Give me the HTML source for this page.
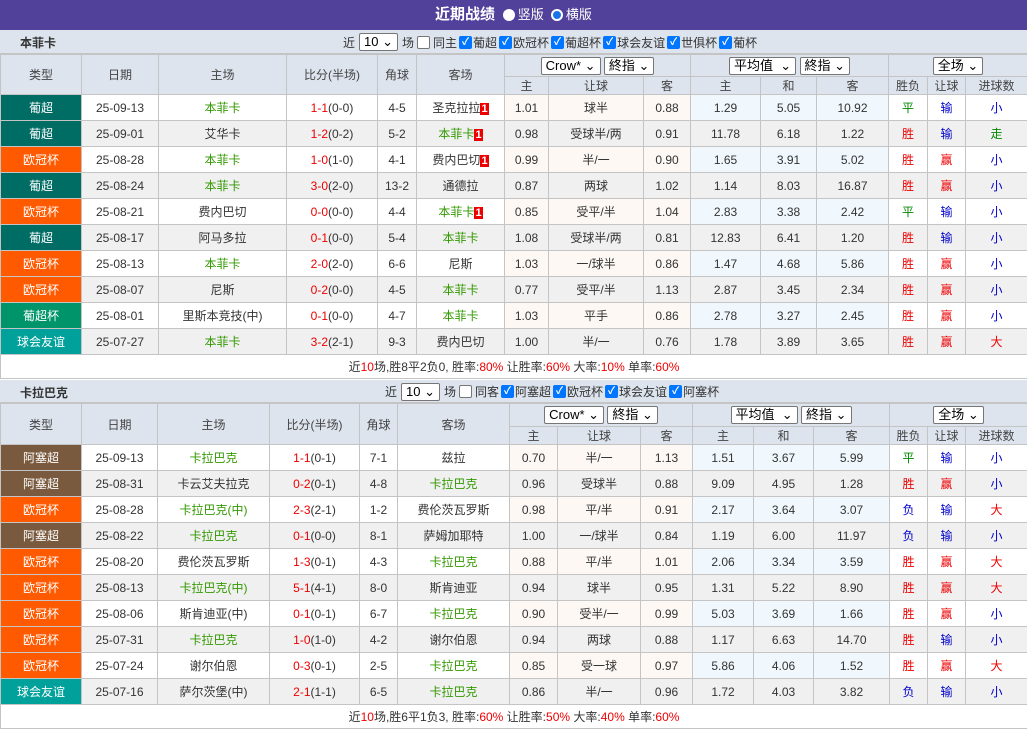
<!DOCTYPE html>
<html><head><meta charset="utf-8">
<style>
*{margin:0;padding:0;box-sizing:border-box}
body{width:1027px;height:730px;overflow:hidden;background:#fff;font-family:"Liberation Sans","Noto Sans CJK SC",sans-serif;font-size:12px;color:#333}
.top{height:30px;background:#52419a;color:#fff;text-align:center;line-height:30px;font-size:13px}
.top b{font-size:15px;margin-right:4px}
.rd{display:inline-block;width:12px;height:12px;border-radius:50%;vertical-align:-2px;margin-right:3px}
.bar{height:24px;background:#dde4ee;position:relative;border-bottom:1px solid #c4c4c4}
.bar .t{position:absolute;left:20px;top:5px;font-weight:bold;font-size:12px;line-height:16px}
.bar .c{position:absolute;top:0;height:24px;white-space:nowrap;font-size:12px;display:flex;align-items:center}
.sel{display:inline-block;border:1px solid #767676;border-radius:2px;background:#fff;height:18px;line-height:16px;padding:0 4px;vertical-align:middle;font-size:13px;color:#000}
.bar .sel{margin:0 4px}
.cb{display:inline-block;width:13px;height:13px;border-radius:2px;background:#0075ff;color:#fff;font-size:10px;line-height:13px;text-align:center;font-weight:bold;margin:0 1px 0 2px}
.ub{display:inline-block;width:13px;height:13px;border-radius:2px;border:1px solid #767676;background:#fff;margin:0 3px}
table{border-collapse:collapse;table-layout:fixed;width:1027px}
td{border:1px solid #c4c4c4;text-align:center;padding:0;white-space:nowrap;overflow:hidden;font-size:12px}
tr.h td{background:#dde4ee;color:#444}
tr.d td{height:26px}
tr.d td.ty{color:#fff}
tr.d td.o{background:#fdf8f4}
tr.d td.a{background:#f1f8fd}
tr.d:nth-child(even) td{background:#f0f0f0}
.g{color:#339900}.r{color:#e00}.bl{color:#0000cc}.gn{color:#008800}
.rc{background:#e00;color:#fff;font-weight:bold;padding:0 1px;font-size:11px}
.sum td{height:24px;background:#fff;font-size:12px}
.ps{background:#006d64!important}.oc{background:#ff5a00!important}.fr{background:#00a09b!important}.pc{background:#00946a!important}.az{background:#7a5a3e!important}
</style></head><body>
<div class="top"><b>近期战绩</b> <span class="rd" style="background:#fff"></span>竖版 &nbsp;<span class="rd" style="border:2px solid #fff;background:#1a73e8"></span>横版</div>

<div class="bar"><span class="t">本菲卡</span><span class="c" style="left:343px">近<span class="sel">10 ⌄</span>场<span class="ub"></span>同主<span class="cb">✓</span>葡超<span class="cb">✓</span>欧冠杯<span class="cb">✓</span>葡超杯<span class="cb">✓</span>球会友谊<span class="cb">✓</span>世俱杯<span class="cb">✓</span>葡杯</span></div>
<table>
<colgroup><col style="width:81px"><col style="width:77px"><col style="width:128px"><col style="width:91px"><col style="width:39px"><col style="width:88px"><col style="width:44px"><col style="width:95px"><col style="width:47px"><col style="width:70px"><col style="width:56px"><col style="width:72px"><col style="width:39px"><col style="width:38px"><col style="width:62px"></colgroup>
<tr class="h" style="height:22px"><td rowspan="2">类型</td><td rowspan="2">日期</td><td rowspan="2">主场</td><td rowspan="2">比分(半场)</td><td rowspan="2">角球</td><td rowspan="2">客场</td><td colspan="3"><span class="sel">Crow* ⌄</span> <span class="sel">終指 ⌄</span></td><td colspan="3"><span class="sel">平均值 &nbsp;⌄</span> <span class="sel">終指 ⌄</span></td><td colspan="3"><span class="sel">全场 ⌄</span></td></tr>
<tr class="h" style="height:17px"><td>主</td><td>让球</td><td>客</td><td>主</td><td>和</td><td>客</td><td>胜负</td><td>让球</td><td>进球数</td></tr>
<tr class="d"><td class="ty ps">葡超</td><td>25-09-13</td><td class="g">本菲卡</td><td><span class="r">1-1</span>(0-0)</td><td>4-5</td><td>圣克拉拉<span class="rc">1</span></td><td class="o">1.01</td><td class="o">球半</td><td class="o">0.88</td><td class="a">1.29</td><td class="a">5.05</td><td class="a">10.92</td><td class="gn">平</td><td class="bl">输</td><td class="bl">小</td></tr>
<tr class="d"><td class="ty ps">葡超</td><td>25-09-01</td><td>艾华卡</td><td><span class="r">1-2</span>(0-2)</td><td>5-2</td><td class="g">本菲卡<span class="rc">1</span></td><td class="o">0.98</td><td class="o">受球半/两</td><td class="o">0.91</td><td class="a">11.78</td><td class="a">6.18</td><td class="a">1.22</td><td class="r">胜</td><td class="bl">输</td><td class="gn">走</td></tr>
<tr class="d"><td class="ty oc">欧冠杯</td><td>25-08-28</td><td class="g">本菲卡</td><td><span class="r">1-0</span>(1-0)</td><td>4-1</td><td>费内巴切<span class="rc">1</span></td><td class="o">0.99</td><td class="o">半/一</td><td class="o">0.90</td><td class="a">1.65</td><td class="a">3.91</td><td class="a">5.02</td><td class="r">胜</td><td class="r">赢</td><td class="bl">小</td></tr>
<tr class="d"><td class="ty ps">葡超</td><td>25-08-24</td><td class="g">本菲卡</td><td><span class="r">3-0</span>(2-0)</td><td>13-2</td><td>通德拉</td><td class="o">0.87</td><td class="o">两球</td><td class="o">1.02</td><td class="a">1.14</td><td class="a">8.03</td><td class="a">16.87</td><td class="r">胜</td><td class="r">赢</td><td class="bl">小</td></tr>
<tr class="d"><td class="ty oc">欧冠杯</td><td>25-08-21</td><td>费内巴切</td><td><span class="r">0-0</span>(0-0)</td><td>4-4</td><td class="g">本菲卡<span class="rc">1</span></td><td class="o">0.85</td><td class="o">受平/半</td><td class="o">1.04</td><td class="a">2.83</td><td class="a">3.38</td><td class="a">2.42</td><td class="gn">平</td><td class="bl">输</td><td class="bl">小</td></tr>
<tr class="d"><td class="ty ps">葡超</td><td>25-08-17</td><td>阿马多拉</td><td><span class="r">0-1</span>(0-0)</td><td>5-4</td><td class="g">本菲卡</td><td class="o">1.08</td><td class="o">受球半/两</td><td class="o">0.81</td><td class="a">12.83</td><td class="a">6.41</td><td class="a">1.20</td><td class="r">胜</td><td class="bl">输</td><td class="bl">小</td></tr>
<tr class="d"><td class="ty oc">欧冠杯</td><td>25-08-13</td><td class="g">本菲卡</td><td><span class="r">2-0</span>(2-0)</td><td>6-6</td><td>尼斯</td><td class="o">1.03</td><td class="o">一/球半</td><td class="o">0.86</td><td class="a">1.47</td><td class="a">4.68</td><td class="a">5.86</td><td class="r">胜</td><td class="r">赢</td><td class="bl">小</td></tr>
<tr class="d"><td class="ty oc">欧冠杯</td><td>25-08-07</td><td>尼斯</td><td><span class="r">0-2</span>(0-0)</td><td>4-5</td><td class="g">本菲卡</td><td class="o">0.77</td><td class="o">受平/半</td><td class="o">1.13</td><td class="a">2.87</td><td class="a">3.45</td><td class="a">2.34</td><td class="r">胜</td><td class="r">赢</td><td class="bl">小</td></tr>
<tr class="d"><td class="ty pc">葡超杯</td><td>25-08-01</td><td>里斯本竞技(中)</td><td><span class="r">0-1</span>(0-0)</td><td>4-7</td><td class="g">本菲卡</td><td class="o">1.03</td><td class="o">平手</td><td class="o">0.86</td><td class="a">2.78</td><td class="a">3.27</td><td class="a">2.45</td><td class="r">胜</td><td class="r">赢</td><td class="bl">小</td></tr>
<tr class="d"><td class="ty fr">球会友谊</td><td>25-07-27</td><td class="g">本菲卡</td><td><span class="r">3-2</span>(2-1)</td><td>9-3</td><td>费内巴切</td><td class="o">1.00</td><td class="o">半/一</td><td class="o">0.76</td><td class="a">1.78</td><td class="a">3.89</td><td class="a">3.65</td><td class="r">胜</td><td class="r">赢</td><td class="r">大</td></tr>
<tr class="sum"><td colspan="15">近<span class="r">10</span>场,胜8平2负0, 胜率:<span class="r">80%</span> 让胜率:<span class="r">60%</span> 大率:<span class="r">10%</span> 单率:<span class="r">60%</span></td></tr>
</table>

<div style="height:1px"></div>
<div class="bar" style="height:23px"><span class="t">卡拉巴克</span><span class="c" style="left:385px;height:23px">近<span class="sel">10 ⌄</span>场<span class="ub"></span>同客<span class="cb">✓</span>阿塞超<span class="cb">✓</span>欧冠杯<span class="cb">✓</span>球会友谊<span class="cb">✓</span>阿塞杯</span></div>
<table>
<colgroup><col style="width:81px"><col style="width:76px"><col style="width:112px"><col style="width:90px"><col style="width:38px"><col style="width:112px"><col style="width:48px"><col style="width:83px"><col style="width:52px"><col style="width:61px"><col style="width:60px"><col style="width:76px"><col style="width:38px"><col style="width:38px"><col style="width:62px"></colgroup>
<tr class="h" style="height:23px"><td rowspan="2">类型</td><td rowspan="2">日期</td><td rowspan="2">主场</td><td rowspan="2">比分(半场)</td><td rowspan="2">角球</td><td rowspan="2">客场</td><td colspan="3"><span class="sel">Crow* ⌄</span> <span class="sel">終指 ⌄</span></td><td colspan="3"><span class="sel">平均值 &nbsp;⌄</span> <span class="sel">終指 ⌄</span></td><td colspan="3"><span class="sel">全场 ⌄</span></td></tr>
<tr class="h" style="height:17px"><td>主</td><td>让球</td><td>客</td><td>主</td><td>和</td><td>客</td><td>胜负</td><td>让球</td><td>进球数</td></tr>
<tr class="d"><td class="ty az">阿塞超</td><td>25-09-13</td><td class="g">卡拉巴克</td><td><span class="r">1-1</span>(0-1)</td><td>7-1</td><td>兹拉</td><td class="o">0.70</td><td class="o">半/一</td><td class="o">1.13</td><td class="a">1.51</td><td class="a">3.67</td><td class="a">5.99</td><td class="gn">平</td><td class="bl">输</td><td class="bl">小</td></tr>
<tr class="d"><td class="ty az">阿塞超</td><td>25-08-31</td><td>卡云艾夫拉克</td><td><span class="r">0-2</span>(0-1)</td><td>4-8</td><td class="g">卡拉巴克</td><td class="o">0.96</td><td class="o">受球半</td><td class="o">0.88</td><td class="a">9.09</td><td class="a">4.95</td><td class="a">1.28</td><td class="r">胜</td><td class="r">赢</td><td class="bl">小</td></tr>
<tr class="d"><td class="ty oc">欧冠杯</td><td>25-08-28</td><td class="g">卡拉巴克(中)</td><td><span class="r">2-3</span>(2-1)</td><td>1-2</td><td>费伦茨瓦罗斯</td><td class="o">0.98</td><td class="o">平/半</td><td class="o">0.91</td><td class="a">2.17</td><td class="a">3.64</td><td class="a">3.07</td><td class="bl">负</td><td class="bl">输</td><td class="r">大</td></tr>
<tr class="d"><td class="ty az">阿塞超</td><td>25-08-22</td><td class="g">卡拉巴克</td><td><span class="r">0-1</span>(0-0)</td><td>8-1</td><td>萨姆加耶特</td><td class="o">1.00</td><td class="o">一/球半</td><td class="o">0.84</td><td class="a">1.19</td><td class="a">6.00</td><td class="a">11.97</td><td class="bl">负</td><td class="bl">输</td><td class="bl">小</td></tr>
<tr class="d"><td class="ty oc">欧冠杯</td><td>25-08-20</td><td>费伦茨瓦罗斯</td><td><span class="r">1-3</span>(0-1)</td><td>4-3</td><td class="g">卡拉巴克</td><td class="o">0.88</td><td class="o">平/半</td><td class="o">1.01</td><td class="a">2.06</td><td class="a">3.34</td><td class="a">3.59</td><td class="r">胜</td><td class="r">赢</td><td class="r">大</td></tr>
<tr class="d"><td class="ty oc">欧冠杯</td><td>25-08-13</td><td class="g">卡拉巴克(中)</td><td><span class="r">5-1</span>(4-1)</td><td>8-0</td><td>斯肯迪亚</td><td class="o">0.94</td><td class="o">球半</td><td class="o">0.95</td><td class="a">1.31</td><td class="a">5.22</td><td class="a">8.90</td><td class="r">胜</td><td class="r">赢</td><td class="r">大</td></tr>
<tr class="d"><td class="ty oc">欧冠杯</td><td>25-08-06</td><td>斯肯迪亚(中)</td><td><span class="r">0-1</span>(0-1)</td><td>6-7</td><td class="g">卡拉巴克</td><td class="o">0.90</td><td class="o">受半/一</td><td class="o">0.99</td><td class="a">5.03</td><td class="a">3.69</td><td class="a">1.66</td><td class="r">胜</td><td class="r">赢</td><td class="bl">小</td></tr>
<tr class="d"><td class="ty oc">欧冠杯</td><td>25-07-31</td><td class="g">卡拉巴克</td><td><span class="r">1-0</span>(1-0)</td><td>4-2</td><td>谢尔伯恩</td><td class="o">0.94</td><td class="o">两球</td><td class="o">0.88</td><td class="a">1.17</td><td class="a">6.63</td><td class="a">14.70</td><td class="r">胜</td><td class="bl">输</td><td class="bl">小</td></tr>
<tr class="d"><td class="ty oc">欧冠杯</td><td>25-07-24</td><td>谢尔伯恩</td><td><span class="r">0-3</span>(0-1)</td><td>2-5</td><td class="g">卡拉巴克</td><td class="o">0.85</td><td class="o">受一球</td><td class="o">0.97</td><td class="a">5.86</td><td class="a">4.06</td><td class="a">1.52</td><td class="r">胜</td><td class="r">赢</td><td class="r">大</td></tr>
<tr class="d"><td class="ty fr">球会友谊</td><td>25-07-16</td><td>萨尔茨堡(中)</td><td><span class="r">2-1</span>(1-1)</td><td>6-5</td><td class="g">卡拉巴克</td><td class="o">0.86</td><td class="o">半/一</td><td class="o">0.96</td><td class="a">1.72</td><td class="a">4.03</td><td class="a">3.82</td><td class="bl">负</td><td class="bl">输</td><td class="bl">小</td></tr>
<tr class="sum"><td colspan="15">近<span class="r">10</span>场,胜6平1负3, 胜率:<span class="r">60%</span> 让胜率:<span class="r">50%</span> 大率:<span class="r">40%</span> 单率:<span class="r">60%</span></td></tr>
</table>
</body></html>
